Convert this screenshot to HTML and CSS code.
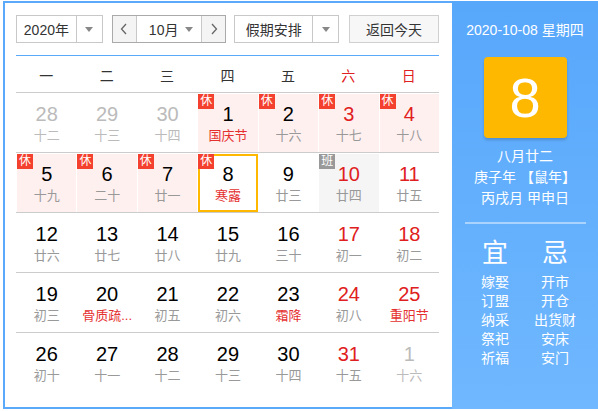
FILE: index.html
```html
<!DOCTYPE html>
<html lang="zh">
<head>
<meta charset="utf-8">
<link rel="stylesheet" href="styles.css">
</head>
<body>
<div class="widget">
  <div class="main">
    <div class="controls">
      <div class="sel sel-year"><span class="sel-text">2020年</span><span class="sel-arrow"><i class="caret"></i></span></div>
      <div class="month-group">
        <span class="nav"><svg width="8" height="12" viewBox="0 0 8 12"><polyline points="6,1 1.5,6 6,11" fill="none" stroke="#666" stroke-width="1.3"/></svg></span>
        <span class="month-sel"><span>10月</span><i class="caret"></i></span>
        <span class="nav nav-next"><svg width="8" height="12" viewBox="0 0 8 12"><polyline points="2,1 6.5,6 2,11" fill="none" stroke="#666" stroke-width="1.3"/></svg></span>
      </div>
      <div class="sel sel-holiday"><span class="sel-text">假期安排</span><span class="sel-arrow"><i class="caret"></i></span></div>
      <div class="btn-today">返回今天</div>
    </div>
    <div class="weekdays">
      <span>一</span><span>二</span><span>三</span><span>四</span><span>五</span><span class="red">六</span><span class="red">日</span>
    </div>
    <div class="row">
      <div class="cell other"><b>28</b><em>十二</em></div>
      <div class="cell other"><b>29</b><em>十三</em></div>
      <div class="cell other"><b>30</b><em>十四</em></div>
      <div class="cell rest"><i class="tag">休</i><b>1</b><em class="fest">国庆节</em></div>
      <div class="cell rest"><i class="tag">休</i><b>2</b><em>十六</em></div>
      <div class="cell rest wk"><i class="tag">休</i><b>3</b><em>十七</em></div>
      <div class="cell rest wk"><i class="tag">休</i><b>4</b><em>十八</em></div>
    </div>
    <div class="row">
      <div class="cell rest"><i class="tag">休</i><b>5</b><em>十九</em></div>
      <div class="cell rest"><i class="tag">休</i><b>6</b><em>二十</em></div>
      <div class="cell rest"><i class="tag">休</i><b>7</b><em>廿一</em></div>
      <div class="cell selected"><i class="tag">休</i><b>8</b><em class="fest">寒露</em></div>
      <div class="cell"><b>9</b><em>廿三</em></div>
      <div class="cell work wk"><i class="tag tag-work">班</i><b>10</b><em>廿四</em></div>
      <div class="cell wk"><b>11</b><em>廿五</em></div>
    </div>
    <div class="row">
      <div class="cell"><b>12</b><em>廿六</em></div>
      <div class="cell"><b>13</b><em>廿七</em></div>
      <div class="cell"><b>14</b><em>廿八</em></div>
      <div class="cell"><b>15</b><em>廿九</em></div>
      <div class="cell"><b>16</b><em>三十</em></div>
      <div class="cell wk"><b>17</b><em>初一</em></div>
      <div class="cell wk"><b>18</b><em>初二</em></div>
    </div>
    <div class="row">
      <div class="cell"><b>19</b><em>初三</em></div>
      <div class="cell"><b>20</b><em class="fest">骨质疏...</em></div>
      <div class="cell"><b>21</b><em>初五</em></div>
      <div class="cell"><b>22</b><em>初六</em></div>
      <div class="cell"><b>23</b><em class="fest">霜降</em></div>
      <div class="cell wk"><b>24</b><em>初八</em></div>
      <div class="cell wk"><b>25</b><em class="fest">重阳节</em></div>
    </div>
    <div class="row last">
      <div class="cell"><b>26</b><em>初十</em></div>
      <div class="cell"><b>27</b><em>十一</em></div>
      <div class="cell"><b>28</b><em>十二</em></div>
      <div class="cell"><b>29</b><em>十三</em></div>
      <div class="cell"><b>30</b><em>十四</em></div>
      <div class="cell wk"><b>31</b><em>十五</em></div>
      <div class="cell other"><b>1</b><em>十六</em></div>
    </div>
  </div>
  <div class="panel">
    <div class="p-date">2020-10-08 星期四</div>
    <div class="p-day">8</div>
    <div class="p-lunar">
      <div>八月廿二</div>
      <div>庚子年 【鼠年】</div>
      <div>丙戌月 甲申日</div>
    </div>
    <div class="p-sep"></div>
    <div class="p-yj">
      <div class="p-col">
        <div class="p-head">宜</div>
        <div>嫁娶</div><div>订盟</div><div>纳采</div><div>祭祀</div><div>祈福</div>
      </div>
      <div class="p-col">
        <div class="p-head">忌</div>
        <div>开市</div><div>开仓</div><div>出货财</div><div>安床</div><div>安门</div>
      </div>
    </div>
  </div>
</div>
</body>
</html>
```

FILE: styles.css
```css
* { box-sizing: border-box; }
html, body { margin: 0; padding: 0; background: #fff; }
body {
  padding: 1px 0 0 3px;
  font-family: "Liberation Sans", "Noto Sans CJK SC", sans-serif;
  color: #333;
}
.widget {
  width: 595px;
  height: 408px;
  border: 2px solid #5aa9fb;
  border-right: 0;
  display: flex;
}
.main {
  width: 447px;
  padding: 12px 13px 0 11px;
}
.controls {
  display: flex;
  height: 28px;
  font-size: 14px;
}
.sel {
  display: flex;
  border: 1px solid #c8c8c8;
  background: #fff;
}
.sel-year { width: 87px; margin-right: 9px; }
.sel-holiday { width: 105px; margin-right: 10px; }
.sel-text {
  flex: 1;
  display: flex;
  align-items: center;
  justify-content: center;
  color: #333;
}
.sel-arrow {
  width: 26px;
  border-left: 1px solid #c8c8c8;
  display: flex;
  align-items: center;
  justify-content: center;
}
.caret {
  display: inline-block;
  width: 0; height: 0;
  border-left: 4px solid transparent;
  border-right: 4px solid transparent;
  border-top: 5px solid #888;
}
.month-group {
  width: 115px;
  margin-right: 8px;
  display: flex;
  border: 1px solid #aaa;
}
.nav {
  width: 24px;
  background: #f4f4f4;
  display: flex;
  align-items: center;
  justify-content: center;
  border-right: 1px solid #c8c8c8;
}
.nav-next { border-right: 0; border-left: 1px solid #c8c8c8; }
.month-sel {
  flex: 1;
  display: flex;
  align-items: center;
  justify-content: center;
  gap: 7px;
  padding-left: 4px;
}
.btn-today {
  width: 90px;
  border: 1px solid #d0d0d0;
  background: #f7f7f7;
  display: flex;
  align-items: center;
  justify-content: center;
  color: #333;
}
.weekdays {
  margin-top: 12px;
  border-top: 1px solid #5aa9fb;
  border-bottom: 1px solid #ccc;
  height: 38px;
  display: grid;
  grid-template-columns: repeat(7, 1fr);
  align-items: center;
  font-size: 14px;
  color: #333;
}
.weekdays span { text-align: center; padding-top: 1px; }
.weekdays .red { color: #e02020; }
.row {
  display: grid;
  grid-template-columns: repeat(7, 1fr);
  height: 60px;
  border-bottom: 1px solid #ccc;
}
.row.last { border-bottom: 0; }
.cell {
  position: relative;
  display: flex;
  flex-direction: column;
  align-items: center;
  padding: 8px 2px 0;
  border-left: 1px solid #fff;
  border-top: 1px solid #fff;
}
.cell b {
  font-weight: normal;
  font-size: 20px;
  line-height: 24px;
  color: #000;
}
.cell em {
  font-style: normal;
  font-size: 13px;
  line-height: 20px;
  color: #999;
  white-space: nowrap;
}
.cell.wk b { color: #e02020; }
.cell.other b, .cell.other em { color: #bbb; }
.cell em.fest { color: #e53030; }
.cell.rest { background: #fff0f0; }
.cell.work { background: #f5f5f5; }
.cell.selected { box-shadow: inset 0 0 0 2px #ffb800; }
.tag {
  position: absolute;
  left: 0; top: 0;
  width: 16px; height: 15px;
  background: #f4402e;
  color: #fff;
  font-style: normal;
  font-size: 12px;
  line-height: 15px;
  text-align: center;
}
.tag-work { background: #999; }
.panel {
  flex: 1;
  background: linear-gradient(#57a7fb, #70b8ff);
  color: #fff;
  display: flex;
  flex-direction: column;
  align-items: center;
  padding-top: 17px;
  margin-top: -2px;
  margin-bottom: -2px;
}
.p-date { font-size: 14px; line-height: 20px; margin-top: 2px; }
.p-day {
  margin-top: 17px;
  width: 83px;
  height: 81px;
  border-radius: 4px;
  background: #ffb800;
  box-shadow: 0 2px 3px rgba(0,0,0,0.18);
  font-size: 56px;
  line-height: 81px;
  text-align: center;
}
.p-lunar {
  margin-top: 8px;
  font-size: 14px;
  line-height: 21px;
  text-align: center;
}
.p-sep {
  margin-top: 13px;
  width: 121px;
  height: 2px;
  background: rgba(255,255,255,0.45);
}
.p-yj {
  margin-top: 14px;
  display: flex;
}
.p-col {
  width: 60px;
  text-align: center;
  font-size: 14px;
  line-height: 19px;
}
.p-head {
  font-size: 26px;
  line-height: 30px;
  margin-bottom: 5px;
}
```
